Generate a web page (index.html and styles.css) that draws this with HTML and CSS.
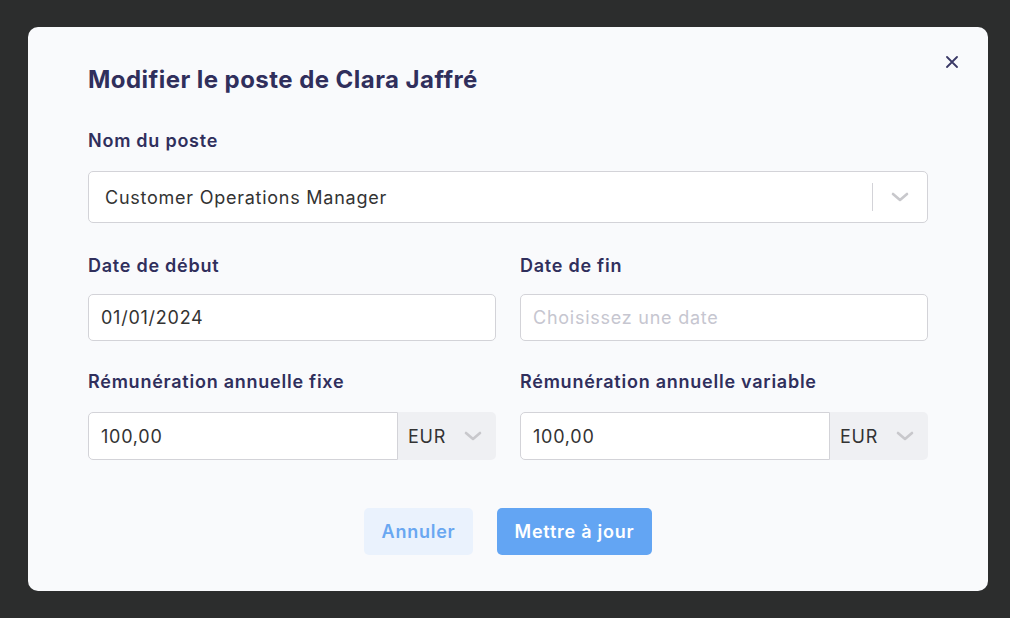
FILE: index.html
```html
<!DOCTYPE html>
<html>
<head>
  <title>Modifier le poste</title>
  <link rel="stylesheet" href="styles.css">
</head>
<body>
<div class="modal">
  <button class="close" type="button">
    <svg width="12" height="12" viewBox="0 0 12 12"><path d="M1 1L11 11M11 1L1 11" stroke="#3a3966" stroke-width="1.8" stroke-linecap="round"/></svg>
  </button>
  <h1>Modifier le poste de Clara Jaffré</h1>

  <div class="field">
    <label>Nom du poste</label>
    <div class="select">
      <span class="value">Customer Operations Manager</span>
      <span class="sep"></span>
      <svg class="chevron" width="18" height="10" viewBox="0 0 18 10"><path d="M2 2L9 8L16 2" fill="none" stroke="#c8c8cc" stroke-width="2.6" stroke-linecap="round" stroke-linejoin="round"/></svg>
    </div>
  </div>

  <div class="row dates">
    <div class="field">
      <label>Date de début</label>
      <input type="text" value="01/01/2024">
    </div>
    <div class="field">
      <label>Date de fin</label>
      <input type="text" placeholder="Choisissez une date">
    </div>
  </div>

  <div class="row money">
    <div class="field">
      <label>Rémunération annuelle fixe</label>
      <div class="amount">
        <input type="text" value="100,00">
        <div class="currency">
          <span>EUR</span>
          <svg width="18" height="10" viewBox="0 0 18 10"><path d="M2 2L9 8L16 2" fill="none" stroke="#c8c8cc" stroke-width="2.6" stroke-linecap="round" stroke-linejoin="round"/></svg>
        </div>
      </div>
    </div>
    <div class="field">
      <label>Rémunération annuelle variable</label>
      <div class="amount">
        <input type="text" value="100,00">
        <div class="currency">
          <span>EUR</span>
          <svg width="18" height="10" viewBox="0 0 18 10"><path d="M2 2L9 8L16 2" fill="none" stroke="#c8c8cc" stroke-width="2.6" stroke-linecap="round" stroke-linejoin="round"/></svg>
        </div>
      </div>
    </div>
  </div>

  <div class="buttons">
    <button class="btn cancel" type="button">Annuler</button>
    <button class="btn primary" type="button">Mettre à jour</button>
  </div>
</div>
</body>
</html>
```

FILE: styles.css
```css
body {
    background-color: #2c2d2d;
    font-family: Inter, "Open Sans", sans-serif;
    letter-spacing: 0.75px;
    margin: 0;
    padding: 27px 22px 0 28px;
}

.modal {
    position: relative;
    box-sizing: border-box;
    width: 960px;
    height: 564px;
    background-color: #f9fafc;
    border-radius: 10px;
    padding: 38px 60px 36px 60px;
}

.close {
    position: absolute;
    top: 29px;
    right: 30px;
    background: none;
    border: none;
    padding: 0;
    cursor: pointer;
    line-height: 0;
}

h1 {
    margin: 0;
    font-size: 24px;
    line-height: 30px;
    font-weight: 700;
    color: #302f5c;
    letter-spacing: 0.45px;
}

label {
    display: block;
    font-size: 18px;
    line-height: 20px;
    font-weight: 600;
    color: #302f5c;
}

.modal > .field {
    margin-top: 36px;
}

.modal > .field label {
    margin-bottom: 20px;
}

.select {
    display: flex;
    align-items: center;
    height: 52px;
    box-sizing: border-box;
    border: 1px solid #d3d3d8;
    border-radius: 5px;
    background-color: #ffffff;
    padding: 0 18px 0 16px;
}

.select .value {
    flex: 1;
    font-size: 18px;
    color: #333333;
}

.select .sep {
    width: 1px;
    height: 28px;
    background-color: #d3d3d8;
    margin-right: 18px;
}

.row {
    display: grid;
    grid-template-columns: 1fr 1fr;
    gap: 24px;
}

.dates {
    margin-top: 33px;
}

.dates label {
    margin-bottom: 18px;
}

.money {
    margin-top: 31px;
}

.money label {
    margin-bottom: 20px;
}

input[type="text"] {
    box-sizing: border-box;
    width: 100%;
    height: 47px;
    border: 1px solid #d3d3d8;
    border-radius: 5px;
    background-color: #ffffff;
    padding: 0 12px;
    font-family: inherit;
    letter-spacing: inherit;
    font-size: 18px;
    color: #333333;
    outline: none;
}

input::placeholder {
    color: #c6c6d0;
}

.amount {
    display: flex;
    height: 48px;
}

.amount input[type="text"] {
    height: 48px;
    flex: 1;
    border-radius: 5px 0 0 5px;
}

.currency {
    display: flex;
    align-items: center;
    justify-content: space-between;
    width: 98px;
    box-sizing: border-box;
    background-color: #eff0f3;
    border-radius: 0 5px 5px 0;
    padding: 0 14px 0 10px;
    font-size: 18px;
    color: #333333;
}

.buttons {
    display: flex;
    justify-content: center;
    gap: 24px;
    margin-top: 48px;
}

.btn {
    height: 47px;
    border: none;
    border-radius: 5px;
    font-family: inherit;
    letter-spacing: inherit;
    font-size: 18px;
    font-weight: 600;
    padding: 0 10px;
    cursor: pointer;
}

.cancel {
    width: 109px;
    background-color: #eaf2fd;
    color: #69a7f1;
}

.primary {
    width: 155px;
    background-color: #63a5f3;
    color: #ffffff;
}
```
